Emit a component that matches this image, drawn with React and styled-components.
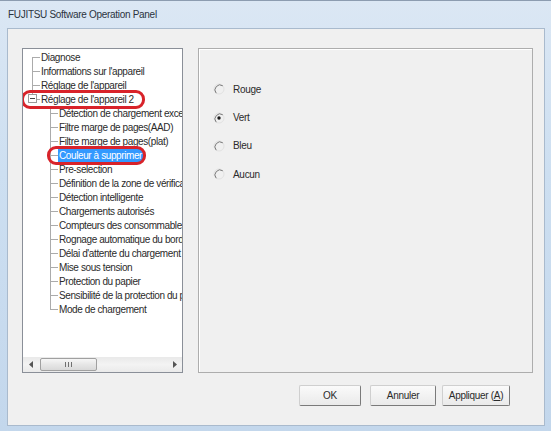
import React from 'react';
import styled, { createGlobalStyle } from 'styled-components';

const GlobalStyle = createGlobalStyle`
  html, body {
    margin: 0;
    padding: 0;
    background: #ffffff;
  }
  body {
    font-family: "Liberation Sans", Arial, sans-serif;
  }
`;

const Window = styled.div`
  width: 551px;
  height: 431px;
  box-sizing: border-box;
  display: flex;
  flex-direction: column;
  padding: 0 6px 5px 7px;
  background: linear-gradient(180deg, #dbe7f4 0%, #cddff1 40%, #c3d7ec 100%);
  border-top: 1px solid #8c9cb0;
`;

const TitleBar = styled.div`
  height: 27px;
  display: flex;
  align-items: center;
  padding-left: 1px;
  font-size: 10px;
  letter-spacing: -0.3px;
  color: #2a3340;
`;

const Client = styled.div`
  flex: 1;
  display: flex;
  flex-direction: column;
  background: #f0f0f0;
  border: 1px solid #a9bacd;
  padding: 19px 11px 0 14px;
`;

const PanelRow = styled.div`
  display: flex;
  gap: 15px;
  height: 325px;
`;

const TreePanel = styled.div`
  width: 161px;
  box-sizing: border-box;
  display: flex;
  flex-direction: column;
  background: #ffffff;
  border: 1px solid #8a8f98;
  overflow: hidden;
`;

const TreeBody = styled.div`
  flex: 1;
  padding-top: 1px;
  overflow: hidden;
`;

const Row = styled.div`
  position: relative;
  height: 14px;
  display: flex;
  align-items: center;
  white-space: nowrap;
  padding-left: ${p => (p.$level === 0 ? 9 : 27)}px;
`;

const Branch = styled.span`
  position: relative;
  flex: none;
  align-self: stretch;
  width: 8px;

  &::before {
    content: '';
    position: absolute;
    left: 0;
    top: ${p => (p.$first ? '50%' : '0')};
    bottom: ${p => (p.$last ? '50%' : '0')};
    border-left: 1px solid #ababab;
  }
  &::after {
    content: '';
    position: absolute;
    left: 0;
    right: 0;
    top: 50%;
    border-top: 1px solid #ababab;
  }
`;

const Expander = styled.span`
  position: absolute;
  z-index: 1;
  left: -4px;
  top: 2px;
  width: 7px;
  height: 7px;
  border: 1px solid #9a9a9a;
  background: #ffffff;

  &::after {
    content: '';
    position: absolute;
    left: 1px;
    right: 1px;
    top: 3px;
    border-top: 1px solid #444;
  }
`;

const Label = styled.span`
  height: 13px;
  line-height: 13px;
  padding: 0 1px;
  font-size: 10px;
  letter-spacing: -0.4px;
  color: ${p => (p.$selected ? '#ffffff' : '#2b2b2b')};
  background: ${p => (p.$selected ? '#3399ff' : 'transparent')};
`;

const Mark = styled.span`
  position: absolute;
  z-index: 2;
  left: ${p => p.$left}px;
  width: ${p => p.$width}px;
  top: -2px;
  bottom: -3px;
  box-sizing: border-box;
  border: 3px solid #d8232a;
  border-radius: 9px;
  pointer-events: none;
`;

const HScroll = styled.div`
  height: 15px;
  flex: none;
  display: flex;
  align-items: center;
  background: linear-gradient(180deg, #e9e9e9 0%, #f3f3f3 50%, #eaeaea 100%);
`;

const ArrowButton = styled.span`
  width: 15px;
  height: 15px;
  flex: none;
  display: flex;
  align-items: center;
  justify-content: center;
`;

const Track = styled.span`
  flex: 1;
`;

const Thumb = styled.span`
  width: 57px;
  height: 13px;
  box-sizing: border-box;
  margin-left: 2px;
  display: flex;
  align-items: center;
  justify-content: center;
  gap: 2px;
  border: 1px solid #a0a0a0;
  border-radius: 2px;
  background: linear-gradient(180deg, #f6f6f6 0%, #e6e6e6 50%, #d9d9d9 100%);
`;

const Grip = styled.span`
  width: 1px;
  height: 5px;
  background: #707070;
`;

const SettingsPanel = styled.div`
  flex: 1;
  display: flex;
  flex-direction: column;
  padding: 26px 0 0 14px;
  background: #f0f0f0;
  border: 1px solid #adadad;
  box-shadow: inset 1px 1px 0 #ffffff;
`;

const Option = styled.label`
  height: 28.4px;
  display: flex;
  align-items: center;
  gap: 8px;
  font-size: 10px;
  letter-spacing: -0.3px;
  color: #2b2b2b;
`;

const ButtonRow = styled.div`
  display: flex;
  justify-content: flex-end;
  margin-top: 12px;
  padding-right: 23px;
`;

const Button = styled.button`
  width: ${p => p.$width}px;
  height: 21px;
  margin-left: ${p => p.$gap || 0}px;
  padding: 0;
  font-family: inherit;
  font-size: 10px;
  letter-spacing: -0.3px;
  color: #2b2b2b;
  background: linear-gradient(180deg, #fafafa 0%, #f2f2f2 50%, #eaeaea 100%);
  border: 1px solid;
  border-color: #cfcfcf #7a7a7a #7a7a7a #cfcfcf;
  border-radius: 2px;
`;

const Radio = ({ checked }) => (
  <svg width="12" height="12" viewBox="0 0 12 12">
    <circle cx="6" cy="6" r="5" fill="none" stroke="#e2e2e2" strokeWidth="1" />
    <path d="M9.8 2.8 A5 5 0 0 0 3.2 10.2" fill="none" stroke="#7b7b7b" strokeWidth="1" />
    {checked && <circle cx="6" cy="6" r="1.7" fill="#1c1c1c" />}
  </svg>
);

const tree = [
  { level: 0, text: 'Diagnose', first: true },
  { level: 0, text: "Informations sur l'appareil" },
  { level: 0, text: "Réglage de l'appareil" },
  { level: 0, text: "Réglage de l'appareil 2", last: true, open: true, mark: { left: -2, width: 124 } },
  { level: 1, text: 'Détection de chargement excessif' },
  { level: 1, text: 'Filtre marge de pages(AAD)' },
  { level: 1, text: 'Filtre marge de pages(plat)' },
  { level: 1, text: 'Couleur à supprimer', selected: true, mark: { left: 24, width: 99 } },
  { level: 1, text: 'Pre-selection' },
  { level: 1, text: 'Définition de la zone de vérification' },
  { level: 1, text: 'Détection intelligente' },
  { level: 1, text: 'Chargements autorisés' },
  { level: 1, text: 'Compteurs des consommables' },
  { level: 1, text: 'Rognage automatique du bord' },
  { level: 1, text: "Délai d'attente du chargement" },
  { level: 1, text: 'Mise sous tension' },
  { level: 1, text: 'Protection du papier' },
  { level: 1, text: 'Sensibilité de la protection du papier' },
  { level: 1, text: 'Mode de chargement', last: true },
];

const colours = ['Rouge', 'Vert', 'Bleu', 'Aucun'];

const App = () => {
  const selectedColour = 'Vert';

  return (
    <>
      <GlobalStyle />
      <Window>
        <TitleBar>FUJITSU Software Operation Panel</TitleBar>
        <Client>
          <PanelRow>
            <TreePanel>
              <TreeBody>
                {tree.map(item => (
                  <Row key={item.text} $level={item.level}>
                    <Branch $first={item.first} $last={item.last}>
                      {item.open && <Expander />}
                    </Branch>
                    <Label $selected={item.selected}>{item.text}</Label>
                    {item.mark && <Mark $left={item.mark.left} $width={item.mark.width} />}
                  </Row>
                ))}
              </TreeBody>
              <HScroll>
                <ArrowButton>
                  <svg width="4" height="7" viewBox="0 0 4 7">
                    <path d="M4 0 L0 3.5 L4 7 Z" fill="#555" />
                  </svg>
                </ArrowButton>
                <Thumb>
                  <Grip />
                  <Grip />
                  <Grip />
                </Thumb>
                <Track />
                <ArrowButton>
                  <svg width="4" height="7" viewBox="0 0 4 7">
                    <path d="M0 0 L4 3.5 L0 7 Z" fill="#555" />
                  </svg>
                </ArrowButton>
              </HScroll>
            </TreePanel>
            <SettingsPanel>
              {colours.map(c => (
                <Option key={c}>
                  <Radio checked={c === selectedColour} />
                  {c}
                </Option>
              ))}
            </SettingsPanel>
          </PanelRow>
          <ButtonRow>
            <Button $width={62}>OK</Button>
            <Button $width={66} $gap={9}>Annuler</Button>
            <Button $width={68} $gap={6}>
              Appliquer (<u>A</u>)
            </Button>
          </ButtonRow>
        </Client>
      </Window>
    </>
  );
};

export default App;
